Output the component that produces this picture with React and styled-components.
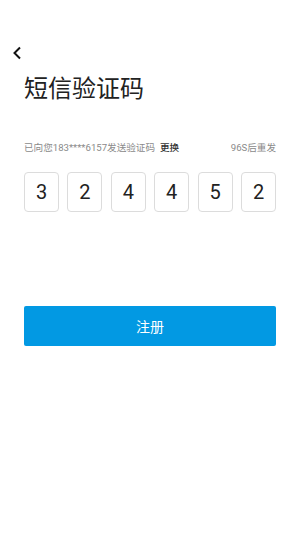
import React from "react";
import styled, { createGlobalStyle } from "styled-components";

const GlobalStyle = createGlobalStyle`
  html, body {
    margin: 0;
    padding: 0;
    background: #fff;
  }
  body {
    font-family: "Roboto", "Noto Sans CJK SC", sans-serif;
  }
`;

const Page = styled.div`
  width: 300px;
  height: 534px;
  background: #fff;
  display: flex;
  flex-direction: column;
  padding: 0 24px;
  box-sizing: border-box;
`;

const Back = styled.button`
  margin: 45px 0 0 -15px;
  width: 16px;
  height: 16px;
  padding: 0;
  border: none;
  background: none;
  display: flex;
  align-items: center;
  justify-content: center;
  cursor: pointer;
`;

const Title = styled.h1`
  margin: 10px 0 0;
  font-family: "Noto Sans CJK SC", sans-serif;
  font-size: 24px;
  font-weight: 400;
  line-height: 32px;
  color: #222;
`;

const InfoRow = styled.div`
  margin-top: 38px;
  display: flex;
  justify-content: space-between;
  align-items: center;
  font-family: "Roboto", "Noto Sans CJK SC", sans-serif;
  font-size: 9.6px;
  line-height: 14px;
  color: #8a8a8a;
`;

const Change = styled.span`
  margin-left: 5px;
  color: #333;
  font-weight: 500;
`;

const Codes = styled.div`
  margin-top: 17px;
  display: flex;
  gap: 8.4px;
`;

const CodeBox = styled.div`
  flex: 1;
  height: 40px;
  box-sizing: border-box;
  border: 1px solid #dcdcdc;
  border-radius: 4px;
  display: flex;
  align-items: center;
  justify-content: center;
  font-family: "Roboto", sans-serif;
  font-size: 20px;
  color: #222;
`;

const Submit = styled.button`
  margin-top: 94px;
  height: 40px;
  border: none;
  border-radius: 2px;
  background: #0299e3;
  color: #fff;
  font-family: "Noto Sans CJK SC", sans-serif;
  font-size: 14px;
  cursor: pointer;
`;

const code = ["3", "2", "4", "4", "5", "2"];

const App = () => {
  return (
    <Page>
      <GlobalStyle />
      <Back aria-label="back">
        <svg width="10" height="14" viewBox="0 0 10 14">
          <path d="M8 1.5 L2.5 7 L8 12.5" fill="none" stroke="#111" strokeWidth="2" />
        </svg>
      </Back>
      <Title>短信验证码</Title>
      <InfoRow>
        <span>
          已向您183****6157发送验证码
          <Change>更换</Change>
        </span>
        <span>96S后重发</span>
      </InfoRow>
      <Codes>
        {code.map((d, i) => (
          <CodeBox key={i}>{d}</CodeBox>
        ))}
      </Codes>
      <Submit>注册</Submit>
    </Page>
  );
};

export default App;
